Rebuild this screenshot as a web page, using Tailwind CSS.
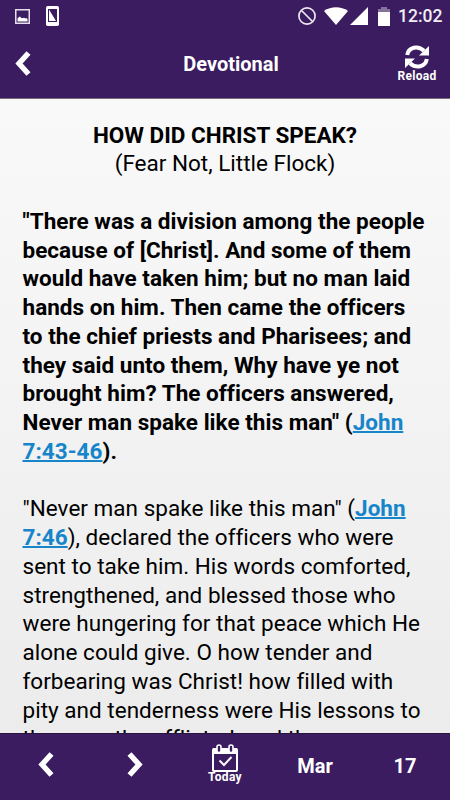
<!DOCTYPE html>
<html lang="en">
<head>
  <meta charset="UTF-8">
  <meta name="viewport" content="width=device-width, initial-scale=1.0">
  <title>Devotional</title>
  <script src="https://cdn.jsdelivr.net/npm/@tailwindcss/browser@4"></script>
</head>
<body class="bg-gray-100 text-black font-['Roboto',sans-serif]">
  <div class="w-[450px] h-[800px] flex flex-col overflow-hidden">
    <!-- Header -->
    <header class="h-[99px] shrink-0 bg-[#3b1c60] text-white border-b border-[#756b78]">
      <!-- Status bar -->
      <div class="h-8 flex items-center justify-between pl-[15px] pr-2">
        <div class="flex items-center gap-4">
          <svg class="w-[15px] h-[15px]" viewBox="0 0 15 15">
            <rect x="0.75" y="0.75" width="13.5" height="13.5" fill="none" stroke="#e4dfea" stroke-width="1.5"/>
            <path d="M2.5 12.5V9.5L4.5 7.5L7 9.3L9 8.8L10.5 9.5L11.5 9L12.5 10V12.5Z" fill="#fff"/>
          </svg>
          <svg class="w-[13px] h-5" viewBox="0 0 13 20">
            <rect width="13" height="20" rx="1.7" fill="#fff"/>
            <path d="M2 3H11V16H2Z" fill="#3b1c60"/>
            <path d="M3 3.5L10 15H3Z" fill="#fff"/>
          </svg>
        </div>
        <div class="flex items-center">
          <svg class="w-[18px] h-[18px] mr-2" viewBox="0 0 18 18" fill="none" stroke="#ece8f0" stroke-width="1.7">
            <circle cx="9" cy="9" r="8.1"/>
            <path d="M3.5 3.5L14.5 14.5"/>
          </svg>
          <svg class="w-6 h-[18px] mr-[2px]" viewBox="0 0 24 18" fill="#fff">
            <path d="M0 4C7 -1 17 -1 24 4L12 18Z"/>
          </svg>
          <svg class="w-[18px] h-[18px] mr-[10px]" viewBox="0 0 18 18" fill="#fff">
            <path d="M18 0V18H0Z"/>
          </svg>
          <svg class="w-3 h-[19px] mr-2" viewBox="0 0 12 19">
            <path d="M3 0H9V2H12V6H0V2H3Z" fill="#85729b"/>
            <path d="M0 5H12V19H0Z" fill="#fff"/>
          </svg>
          <span class="text-[17.5px] font-medium leading-8 text-[#f0edf3] w-11 whitespace-nowrap">12:02</span>
        </div>
      </div>
      <!-- Title bar -->
      <div class="h-[66px] grid grid-cols-[100px_1fr_88px] items-center">
        <svg class="w-4 h-[25px] ml-[15px] mb-[3px]" viewBox="0 0 16 25" fill="none" stroke="#fff" stroke-width="5.4">
          <path d="M13.5 2L4 12.5L13.5 23"/>
        </svg>
        <h1 class="text-center text-[20px] font-bold leading-[64px] pb-[2px]">Devotional</h1>
        <div class="flex flex-col items-center pl-[22px] pb-[3px]">
          <svg class="w-[24px] h-[24px]" viewBox="0 0 24 24">
            <g fill="none" stroke="#fff" stroke-width="4">
              <path d="M2.2 10C3.5 2 13 .2 19 5.8"/>
              <path d="M21.8 14C20.5 22 11 23.8 5 18.2"/>
            </g>
            <path d="M24 1V10.5H14Z M0 23V13.5H10Z" fill="#fff"/>
          </svg>
          <span class="text-[12px] font-bold leading-[14px] tracking-[0.3px]">Reload</span>
        </div>
      </div>
    </header>

    <!-- Reading -->
    <main class="flex-1 min-h-0 overflow-hidden bg-linear-to-b from-[#f9f9f9] to-[#ececec] pl-[22.5px] pt-[21.5px] text-[22.5px] leading-[28.75px] whitespace-nowrap [font-variant-ligatures:none]">
      <div class="text-center pr-[22.5px]">
        <h2 class="font-bold">HOW DID CHRIST SPEAK?</h2>
        <p>(Fear Not, Little Flock)</p>
      </div>
      <p class="mt-[28.75px] font-bold tracking-[0.03px]">
        "There was a division among the people<br>
        because of [Christ]. And some of them<br>
        would have taken him; but no man laid<br>
        hands on him. Then came the officers<br>
        to the chief priests and Pharisees; and<br>
        they said unto them, Why have ye not<br>
        brought him? The officers answered,<br>
        Never man spake like this man" (<a class="text-[#1785c9] underline decoration-[1.5px]">John<br>
        7:43-46</a>).
      </p>
      <p class="mt-[28.75px] tracking-[0.02px]">
        "Never man spake like this man" (<a class="font-bold text-[#1785c9] underline decoration-[1.5px]">John<br>
        7:46</a>), declared the officers who were<br>
        sent to take him. His words comforted,<br>
        strengthened, and blessed those who<br>
        were hungering for that peace which He<br>
        alone could give. O how tender and<br>
        forbearing was Christ! how filled with<br>
        pity and tenderness were His lessons to<br>
        the poor, the afflicted, and the
      </p>
    </main>

    <!-- Day navigation -->
    <nav class="h-[67px] shrink-0 grid grid-cols-5 items-center justify-items-center bg-[#3b1c60] text-white border-t border-[#29143f] text-[20px] font-bold">
      <svg class="w-4 h-[25px] mb-[5px] ml-[2px]" viewBox="0 0 16 25" fill="none" stroke="#fff" stroke-width="5.4">
        <path d="M13.5 2L4 12.5L13.5 23"/>
      </svg>
      <svg class="w-4 h-[25px] mb-[5px]" viewBox="0 0 16 25" fill="none" stroke="#fff" stroke-width="5.4">
        <path d="M2.5 2L12 12.5L2.5 23"/>
      </svg>
      <div class="flex flex-col items-center pb-[7px]">
        <svg class="w-[26px] h-7" viewBox="0 0 26 28">
          <rect x="1" y="5" width="24" height="22" rx="1" fill="none" stroke="#fff" stroke-width="2"/>
          <path d="M1 4H25V10H1Z" fill="#fff"/>
          <g fill="#3b1c60" stroke="#fff" stroke-width="1.6">
            <rect x="5" y="1" width="4" height="7.5" rx="2"/>
            <rect x="17" y="1" width="4" height="7.5" rx="2"/>
          </g>
          <path d="M7.5 16.5L12 21L19.5 13" fill="none" stroke="#fff" stroke-width="2"/>
        </svg>
        <span class="text-[12px] leading-[11px] tracking-[0.3px]">Today</span>
      </div>
      <span class="pb-[2px]">Mar</span>
      <span class="pb-[2px]">17</span>
    </nav>
  </div>
</body>
</html>
